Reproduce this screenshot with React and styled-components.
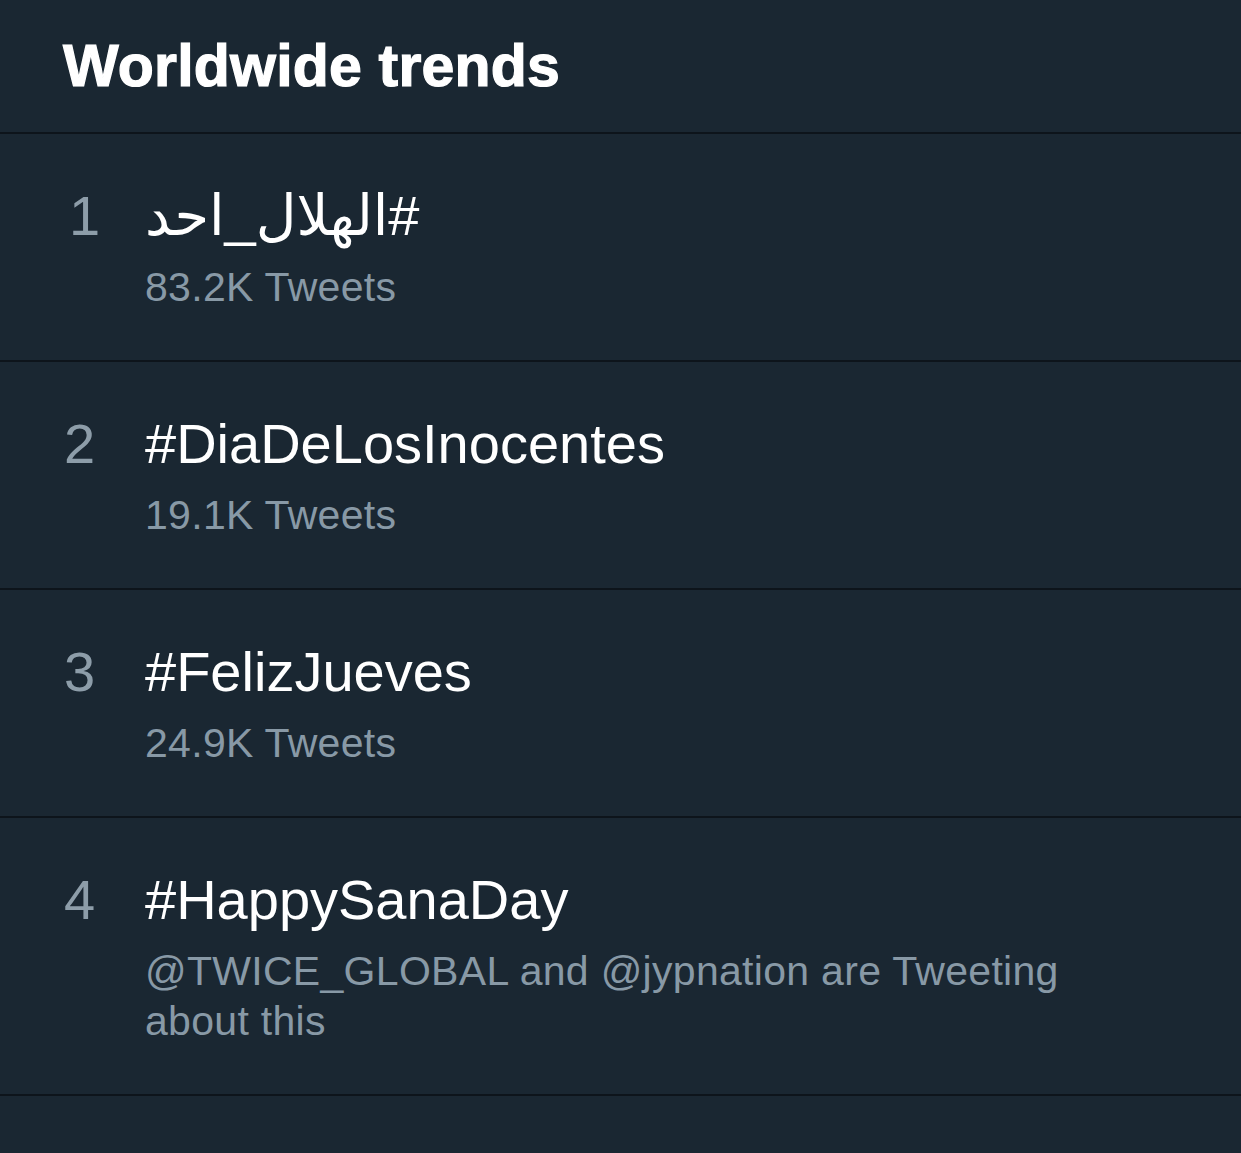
import styled, { createGlobalStyle } from 'styled-components';

const GlobalStyle = createGlobalStyle`
  html, body {
    margin: 0;
    padding: 0;
    background: #1a2732;
  }
  body {
    font-family: "Liberation Sans", "DejaVu Sans", Arial, sans-serif;
    -webkit-font-smoothing: antialiased;
  }
`;

/* PANEL */
const Panel = styled.div`
  min-height: 100vh;
  background: #1a2732;
  color: #ffffff;
`;

/* HEADER */
const Header = styled.header`
  padding: 31px 63px;
  border-bottom: 2px solid #0d141b;

  h1 {
    margin: 0;
    font-size: 59px;
    line-height: 70px;
    font-weight: 700;
    letter-spacing: 0.2px;
    color: #ffffff;
    -webkit-text-stroke: 1.2px #ffffff;
  }
`;

/* TREND ROW */
const TrendRow = styled.div`
  display: flex;
  align-items: flex-start;
  padding: 49px 130px 48px 63px;
  border-bottom: 2px solid #0d141b;
`;

const Rank = styled.div`
  width: 82px;
  flex-shrink: 0;
  padding-left: ${(p) => (p.$narrow ? '6px' : '1px')};
  box-sizing: border-box;
  font-size: 56px;
  line-height: 66px;
  color: #8d9da9;
`;

const Body = styled.div`
  flex: 1;
  min-width: 0;
`;

const Title = styled.div`
  font-size: 56px;
  line-height: 66px;
  color: #ffffff;
  white-space: nowrap;
`;

const Meta = styled.div`
  margin-top: 13px;
  font-size: 41px;
  line-height: 50px;
  letter-spacing: 0.3px;
  color: #8899a6;
`;

const trends = [
  { rank: 1, name: '#الهلال_احد', meta: '83.2K Tweets' },
  { rank: 2, name: '#DiaDeLosInocentes', meta: '19.1K Tweets' },
  { rank: 3, name: '#FelizJueves', meta: '24.9K Tweets' },
  { rank: 4, name: '#HappySanaDay', meta: '@TWICE_GLOBAL and @jypnation are Tweeting about this' },
];

const App = () => {
  return (
    <Panel>
      <GlobalStyle />
      <Header>
        <h1>Worldwide trends</h1>
      </Header>
      {trends.map((t) => (
        <TrendRow key={t.rank}>
          <Rank $narrow={t.rank === 1}>{t.rank}</Rank>
          <Body>
            <Title>
              <span dir="auto">{t.name}</span>
            </Title>
            <Meta>{t.meta}</Meta>
          </Body>
        </TrendRow>
      ))}
    </Panel>
  );
};

export default App;
